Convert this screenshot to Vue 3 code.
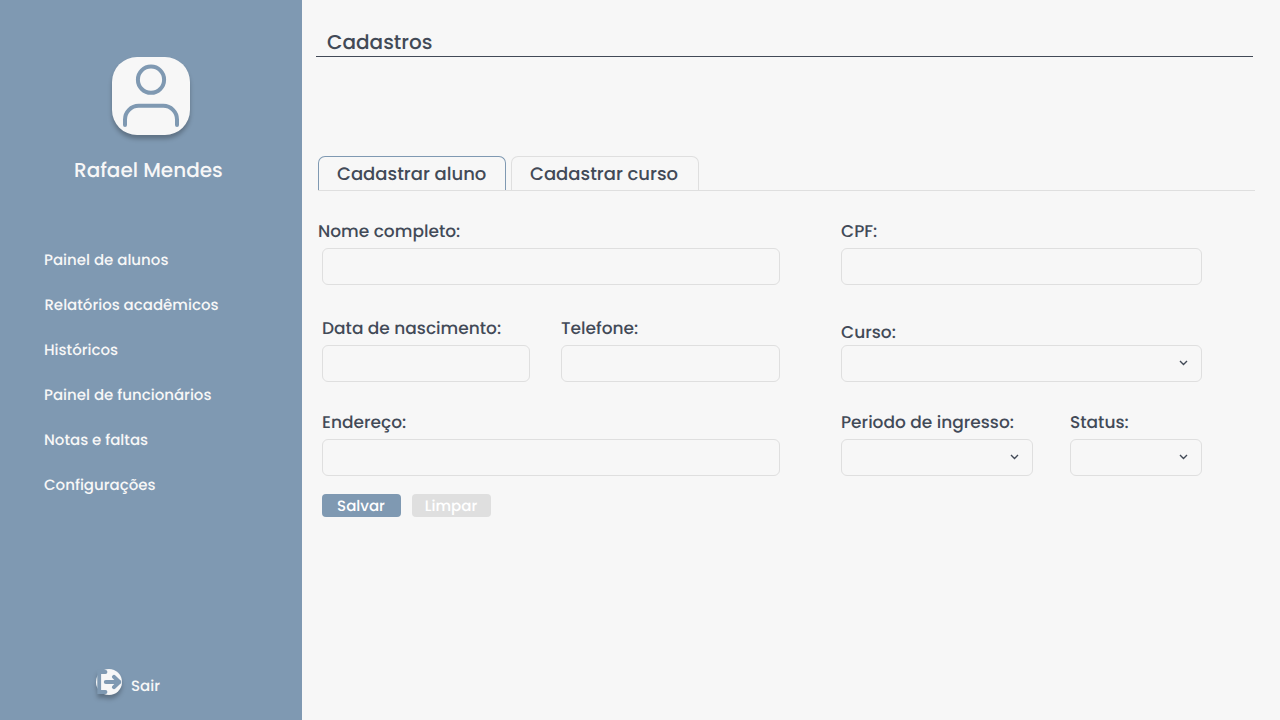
<script setup>
const nav = [
  'Painel de alunos',
  'Relatórios acadêmicos',
  'Históricos',
  'Painel de funcionários',
  'Notas e faltas',
  'Configurações'
]
</script>

<template>
  <div class="page">
    <aside class="sidebar">
      <div class="avatar">
        <svg width="78" height="78" viewBox="0 0 78 78" fill="none" stroke="#7f99b2" stroke-width="4" stroke-linecap="round">
          <circle cx="39" cy="22.7" r="13.1" />
          <path d="M13 68V62.5A13.7 13.7 0 0 1 26.7 48.8H51.3A13.7 13.7 0 0 1 65 62.5V68" />
        </svg>
      </div>
      <div class="user">Rafael Mendes</div>
      <nav class="nav">
        <a v-for="item in nav" :key="item">{{ item }}</a>
      </nav>
      <div class="exit">
        <svg class="exit-icon" width="26" height="26" viewBox="0 0 26 26">
          <circle cx="13" cy="13" r="13" fill="#f7f7f7" />
          <g fill="none" stroke="#7f99b2" stroke-linecap="round">
            <path d="M9.5 3H3.2V23H9.5" stroke-width="3.8" />
            <path d="M9.8 13H23" stroke-width="4" />
            <path d="M18 7.8L23.2 13L18 18.2" stroke-width="4" stroke-linejoin="round" />
          </g>
        </svg>
        <span>Sair</span>
      </div>
    </aside>
    <main class="main">
      <header class="title">Cadastros</header>
      <div class="tabs">
        <div class="tab active">Cadastrar aluno</div>
        <div class="tab">Cadastrar curso</div>
      </div>
      <form class="form">
        <div class="field"><label class="outdent">Nome completo:</label><div class="box"></div></div>
        <div class="field"><label>CPF:</label><div class="box"></div></div>
        <div class="pair dates">
          <div class="field"><label>Data de nascimento:</label><div class="box"></div></div>
          <div class="field"><label>Telefone:</label><div class="box"></div></div>
        </div>
        <div class="field">
          <label class="low">Curso:</label>
          <div class="box"><svg class="chev" width="10" height="6" viewBox="0 0 10 6"><path d="M2 1L5.5 4.5L9 1" /></svg></div>
        </div>
        <div class="field"><label>Endereço:</label><div class="box"></div></div>
        <div class="pair status">
          <div class="field">
            <label>Periodo de ingresso:</label>
            <div class="box"><svg class="chev" width="10" height="6" viewBox="0 0 10 6"><path d="M2 1L5.5 4.5L9 1" /></svg></div>
          </div>
          <div class="field">
            <label>Status:</label>
            <div class="box"><svg class="chev" width="10" height="6" viewBox="0 0 10 6"><path d="M2 1L5.5 4.5L9 1" /></svg></div>
          </div>
        </div>
      </form>
      <div class="actions">
        <button class="btn save" type="button">Salvar</button>
        <button class="btn clear" type="button">Limpar</button>
      </div>
    </main>
  </div>
</template>

<style scoped>
.page { display: flex; width: 1280px; height: 720px; overflow: hidden; background: #f7f7f7; font-family: Poppins, Inter, sans-serif; font-weight: 500; color: #424a57; white-space: nowrap; text-rendering: geometricPrecision; }
.sidebar { width: 302px; height: 720px; box-sizing: border-box; padding-top: 57px; display: flex; flex-direction: column; background: #7f99b2; color: #f7f7f7; flex: none; }
.avatar { width: 78px; height: 78px; margin-left: 112px; border-radius: 25px; background: #f7f7f7; box-shadow: 0 4px 4px rgba(0, 0, 0, .25); }
.avatar svg { display: block; }
.user { margin: 20px 0 0 74px; height: 30px; line-height: 30px; font-size: 20px; }
.nav { display: flex; flex-direction: column; gap: 21px; margin: 64px 0 0 44px; font-size: 15px; }
.nav a { height: 24px; line-height: 24px; }
.nav a:nth-child(2) { margin-left: 0.4px; }
.exit { display: flex; align-items: flex-start; gap: 9px; margin: auto 0 20px 96px; height: 31px; font-size: 15px; }
.exit span { line-height: 24px; margin-top: 6px; }
.exit-icon { filter: drop-shadow(0 4px 2px rgba(0, 0, 0, .25)); }
.main { flex: 1; }
.title { width: 937px; height: 57px; box-sizing: border-box; margin-left: 14px; padding: 27px 0 0 11px; border-bottom: 1px solid #424a57; font-size: 20px; line-height: 30px; }
.tabs { display: flex; gap: 5px; margin: 99px 0 0 16px; width: 937px; border-bottom: 1px solid #dfdfdf; font-size: 18px; }
.tab { box-sizing: border-box; width: 188px; height: 34px; line-height: 35px; padding-left: 18px; border: 1px solid #dfdfdf; border-bottom: 0; border-radius: 7px 7px 0 0; }
.tab.active { border-color: #7f99b2; }
.form { display: grid; grid-template-columns: 458px 361px; column-gap: 61px; padding: 28px 0 0 20px; grid-template-rows: 97px 94px 66px; }
.field label { display: block; height: 24px; line-height: 24px; margin-bottom: 5px; font-size: 17px; }
.field .outdent { margin-left: -4px; }
.field .low { padding-top: 4px; margin-bottom: 1px; }
.box { height: 37px; box-sizing: border-box; border: 1px solid #dfdfdf; border-radius: 6px; display: flex; align-items: center; justify-content: flex-end; padding: 0 13px 1px 0; }
.chev { fill: none; stroke: #424a57; stroke-width: 1.4; }
.pair { display: grid; }
.dates { grid-template-columns: 208px 219px; gap: 31px; }
.status { grid-template-columns: 192px 132px; gap: 37px; }
.actions { display: flex; gap: 11px; margin: 18px 0 0 20px; }
.btn { box-sizing: border-box; width: 79px; height: 23px; padding: 2px 1px 0 0; border: 0; border-radius: 4px; font: inherit; font-size: 15px; line-height: 21px; color: #fff; text-rendering: inherit; }
.save { background: #7f99b2; }
.clear { background: #dfdfdf; }
</style>

<style>
html, body { background: #f7f7f7; }
</style>
